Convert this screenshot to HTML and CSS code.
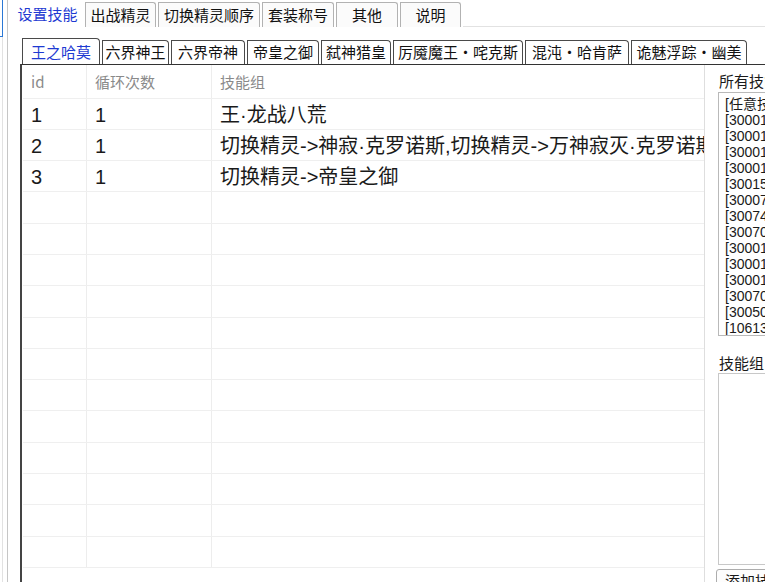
FILE: index.html
```html
<!DOCTYPE html>
<html lang="zh-CN">
<head>
<meta charset="utf-8">
<title>设置技能</title>
<link rel="stylesheet" href="styles.css">
</head>
<body>
<div class="app">
  <div class="side">
    <div class="side-focus"></div>
    <div class="side-rest"></div>
  </div>
  <div class="outer">
    <div class="outer-tabs">
      <div class="otab active w71">设置技能</div>
      <div class="otab w71">出战精灵</div>
      <div class="otab w102">切换精灵顺序</div>
      <div class="otab w72">套装称号</div>
      <div class="otab w62">其他</div>
      <div class="otab w61">说明</div>
      <div class="otab-fill"></div>
    </div>
    <div class="outer-page">
      <div class="inner">
        <div class="inner-tabs">
          <div class="itab active w78">王之哈莫</div>
          <div class="itab w67">六界神王</div>
          <div class="itab w74">六界帝神</div>
          <div class="itab w72">帝皇之御</div>
          <div class="itab w70">弑神猎皇</div>
          <div class="itab w130">厉魇魔王・咤克斯</div>
          <div class="itab w104">混沌・哈肯萨</div>
          <div class="itab w116">诡魅浮踪・幽美</div>
        </div>
        <div class="inner-page">
          <div class="grid">
            <div class="row head">
              <div class="cell">id</div>
              <div class="cell">循环次数</div>
              <div class="cell">技能组</div>
            </div>
            <div class="row">
              <div class="cell">1</div>
              <div class="cell">1</div>
              <div class="cell">王·龙战八荒</div>
            </div>
            <div class="row">
              <div class="cell">2</div>
              <div class="cell">1</div>
              <div class="cell">切换精灵->神寂·克罗诺斯,切换精灵->万神寂灭·克罗诺斯</div>
            </div>
            <div class="row">
              <div class="cell">3</div>
              <div class="cell">1</div>
              <div class="cell">切换精灵->帝皇之御</div>
            </div>
            <div class="row"><div class="cell"></div><div class="cell"></div><div class="cell"></div></div>
            <div class="row"><div class="cell"></div><div class="cell"></div><div class="cell"></div></div>
            <div class="row"><div class="cell"></div><div class="cell"></div><div class="cell"></div></div>
            <div class="row"><div class="cell"></div><div class="cell"></div><div class="cell"></div></div>
            <div class="row"><div class="cell"></div><div class="cell"></div><div class="cell"></div></div>
            <div class="row"><div class="cell"></div><div class="cell"></div><div class="cell"></div></div>
            <div class="row"><div class="cell"></div><div class="cell"></div><div class="cell"></div></div>
            <div class="row"><div class="cell"></div><div class="cell"></div><div class="cell"></div></div>
            <div class="row"><div class="cell"></div><div class="cell"></div><div class="cell"></div></div>
            <div class="row"><div class="cell"></div><div class="cell"></div><div class="cell"></div></div>
            <div class="row"><div class="cell"></div><div class="cell"></div><div class="cell"></div></div>
            <div class="row"><div class="cell"></div><div class="cell"></div><div class="cell"></div></div>
          </div>
          <div class="rpanel">
            <div class="plabel">所有技能</div>
            <div class="listbox">
              <div class="item">[任意技能]</div>
              <div class="item">[300011]王·龙战八荒</div>
              <div class="item">[300012]王·天罚</div>
              <div class="item">[300013]王·神威</div>
              <div class="item">[300014]王·破灭</div>
              <div class="item">[300151]神寂</div>
              <div class="item">[300072]万神寂灭</div>
              <div class="item">[300741]帝皇之御</div>
              <div class="item">[300701]六界神王</div>
              <div class="item">[300016]弑神</div>
              <div class="item">[300017]猎皇</div>
              <div class="item">[300018]魔王</div>
              <div class="item">[300702]混沌</div>
              <div class="item">[300503]幽美</div>
              <div class="item">[106131]浮踪</div>
            </div>
            <div class="plabel second">技能组</div>
            <div class="groupbox"></div>
            <div class="btn">添加技能</div>
          </div>
        </div>
      </div>
    </div>
  </div>
</div>
</body>
</html>
```

FILE: styles.css
```css
html, body {
  margin: 0;
  padding: 0;
}
body {
  width: 765px;
  height: 582px;
  overflow: hidden;
  background: #ffffff;
  font-family: "Noto Sans CJK SC", "Microsoft YaHei", sans-serif;
  color: #1a1a1a;
}
.app {
  display: flex;
  height: 582px;
}
.side {
  width: 7px;
  flex: none;
  display: flex;
  flex-direction: column;
}
.side-focus {
  width: 2px;
  height: 36px;
  border-right: 1px solid #2b78d6;
  border-bottom: 1px solid #2b78d6;
  flex: none;
}
.side-rest {
  flex: 1;
  width: 2px;
  border-right: 1px solid #e2e2e2;
}
.outer {
  flex: 1;
  min-width: 0;
  border-left: 1px solid #c6c6c6;
  display: flex;
  flex-direction: column;
}
.outer-tabs {
  height: 27px;
  flex: none;
  display: flex;
  align-items: flex-end;
  gap: 2px;
  padding-left: 4px;
}
.otab {
  box-sizing: border-box;
  flex: none;
  height: 25px;
  border: 1px solid #b2b2b2;
  border-bottom: none;
  border-top-right-radius: 3px;
  background: #fbfbfb;
  font-size: 15px;
  line-height: 23px;
  text-align: center;
  color: #111111;
  white-space: nowrap;
}
.otab.active {
  height: 27px;
  border-color: transparent;
  background: #ffffff;
  color: #1e3ad2;
  line-height: 25px;
}
.otab-fill {
  flex: 1;
  height: 1px;
  background: #e2e2e2;
}
.w61 { width: 61px; }
.w62 { width: 62px; }
.w67 { width: 67px; }
.w70 { width: 70px; }
.w71 { width: 71px; }
.w72 { width: 72px; }
.w74 { width: 74px; }
.w78 { width: 78px; }
.w102 { width: 102px; }
.w104 { width: 104px; }
.w116 { width: 116px; }
.w130 { width: 130px; }

.outer-page {
  flex: 1;
  min-height: 0;
  display: flex;
}
.inner {
  flex: 1;
  min-width: 0;
  margin: 11px 0 0 12px;
  display: flex;
  flex-direction: column;
}
.inner-tabs {
  height: 26px;
  flex: none;
  display: flex;
  align-items: flex-end;
  gap: 2px;
  padding-left: 2px;
}
.itab {
  box-sizing: border-box;
  flex: none;
  height: 24px;
  border: 1px solid #4a4a4a;
  border-bottom: none;
  border-top-right-radius: 4px;
  background: #ffffff;
  font-size: 15px;
  line-height: 22px;
  text-align: center;
  color: #111111;
  white-space: nowrap;
}
.itab.active {
  height: 26px;
  color: #1e3ad2;
  line-height: 26px;
}
.inner-page {
  flex: 1;
  min-height: 0;
  border-top: 1px solid #333333;
  border-left: 2px solid #444444;
  display: flex;
  overflow: hidden;
}
.grid {
  flex: none;
  width: 682px;
  margin-left: 1px;
  box-sizing: border-box;
  border-right: 1px solid #dedede;
}
.row {
  box-sizing: border-box;
  display: grid;
  grid-template-columns: 64px 125px 1fr;
  height: 31.3px;
  border-bottom: 1px solid #efefef;
}
.row.head {
  height: 33.5px;
}
.cell {
  box-sizing: border-box;
  border-right: 1px solid #ededed;
  padding-left: 8px;
  font-family: "Liberation Sans", "Noto Sans CJK SC", sans-serif;
  font-size: 20px;
  line-height: 33px;
  white-space: nowrap;
  overflow: hidden;
  color: #1a1a1a;
}
.cell:last-child {
  border-right: none;
}
.row.head .cell {
  font-family: "Noto Sans CJK SC", sans-serif;
  font-size: 15px;
  line-height: 34px;
  color: #8a8a8a;
}
.rpanel {
  flex: 1;
  min-width: 0;
  padding-left: 13px;
  display: flex;
  flex-direction: column;
}
.plabel {
  flex: none;
  margin-top: 6px;
  padding-left: 1px;
  font-size: 15px;
  line-height: 20px;
  height: 20px;
  white-space: nowrap;
  overflow: hidden;
  color: #1a1a1a;
}
.plabel.second {
  margin-top: 17px;
}
.listbox {
  box-sizing: border-box;
  margin-top: 1px;
  width: 90px;
  height: 244px;
  flex: none;
  border: 1px solid #b9b9b9;
  padding: 3px 0 0 6px;
  overflow: hidden;
}
.item {
  font-family: "Liberation Sans", "Noto Sans CJK SC", sans-serif;
  font-size: 14px;
  line-height: 16px;
  height: 16px;
  white-space: nowrap;
  color: #1a1a1a;
}
.groupbox {
  box-sizing: border-box;
  width: 90px;
  height: 192px;
  flex: none;
  border: 1px solid #c8c8c8;
}
.btn {
  box-sizing: border-box;
  margin: 4px 0 0 -2px;
  width: 90px;
  height: 24px;
  flex: none;
  border: 1px solid #adadad;
  border-radius: 3px;
  background: #fdfdfd;
  font-size: 15px;
  line-height: 22px;
  padding-left: 8px;
  white-space: nowrap;
  color: #1a1a1a;
}
```
